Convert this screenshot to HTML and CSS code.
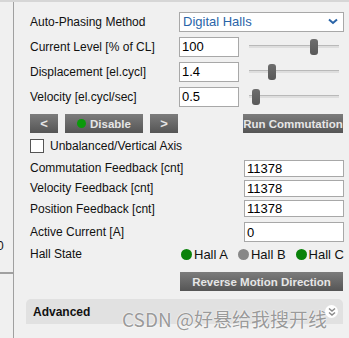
FILE: index.html
```html
<!DOCTYPE html>
<html lang="en">
<head>
  <meta charset="UTF-8">
  <title>Commutation</title>
  <link rel="stylesheet" href="styles.css">
</head>
<body>

  <div class="page">

    <div class="side">
      <div class="side-value">0</div>
      <div class="side-rule"></div>
    </div>

    <div class="main">

      <div class="row">
        <span class="label">Auto-Phasing Method</span>
        <div class="select">
          <span>Digital Halls</span>
          <svg width="10" height="7" viewBox="0 0 10 7"><path d="M1 1.5 L5 5 L9 1.5" fill="none" stroke="#2a64a8" stroke-width="2"/></svg>
        </div>
      </div>

      <div class="row">
        <span class="label">Current Level [% of CL]</span>
        <input class="field" type="text" value="100">
        <div class="slider"><div class="track"></div><div class="thumb" style="left: 61px"></div></div>
      </div>

      <div class="row">
        <span class="label">Displacement [el.cycl]</span>
        <input class="field" type="text" value="1.4">
        <div class="slider"><div class="track"></div><div class="thumb" style="left: 19px"></div></div>
      </div>

      <div class="row">
        <span class="label">Velocity [el.cycl/sec]</span>
        <input class="field" type="text" value="0.5">
        <div class="slider"><div class="track"></div><div class="thumb" style="left: 3px"></div></div>
      </div>

      <div class="button-row">
        <button class="btn btn-arrow">&lt;</button>
        <button class="btn btn-enable"><span class="dot"></span>Disable</button>
        <button class="btn btn-arrow">&gt;</button>
        <button class="btn btn-run">Run Commutation</button>
      </div>

      <div class="check-row">
        <span class="checkbox"></span>
        <span>Unbalanced/Vertical Axis</span>
      </div>

      <div class="row feed r1">
        <span class="label">Commutation Feedback [cnt]</span>
        <input class="value" type="text" value="11378">
      </div>
      <div class="row feed r2">
        <span class="label">Velocity Feedback [cnt]</span>
        <input class="value" type="text" value="11378">
      </div>
      <div class="row feed r3">
        <span class="label">Position Feedback [cnt]</span>
        <input class="value" type="text" value="11378">
      </div>
      <div class="row feed r4">
        <span class="label">Active Current [A]</span>
        <input class="value tall" type="text" value="0">
      </div>

      <div class="row hall-row">
        <span class="label">Hall State</span>
        <div class="halls">
          <span class="hall"><span class="led on"></span>Hall A</span>
          <span class="hall"><span class="led"></span>Hall B</span>
          <span class="hall"><span class="led on"></span>Hall C</span>
        </div>
      </div>

      <div class="reverse-row">
        <button class="btn btn-reverse">Reverse Motion Direction</button>
      </div>

      <div class="advanced">
        <span>Advanced</span>
        <span class="expand">
          <svg width="12" height="12" viewBox="0 0 12 12"><path d="M3 2.5 L6 5 L9 2.5 M3 6.5 L6 9 L9 6.5" fill="none" stroke="#8a8a8a" stroke-width="1.5"/></svg>
        </span>
      </div>

    </div>

    <div class="watermark">CSDN @好悬给我搜开线</div>

  </div>

</body>
</html>
```

FILE: styles.css
```css
body {
  margin: 0;
  background: #f0f0f0;
  font-family: "Liberation Sans", Arial, sans-serif;
  font-size: 12px;
  color: #111;
}

.page {
  position: relative;
  display: flex;
  height: 338px;
  border-top: 2px solid #d6d6d6;
  box-sizing: border-box;
  overflow: hidden;
}

.side {
  width: 13px;
  flex: none;
  border-right: 1px solid #a0a0a0;
  overflow: hidden;
}

.side-value {
  margin-top: 236px;
  margin-left: -3px;
  height: 16px;
  line-height: 16px;
}

.side-value + .side-rule {
  margin-top: 18px;
  border-top: 2px solid #a0a0a0;
}

.main {
  flex: 1;
  padding: 7px 5px 0 16px;
}

.row {
  display: flex;
  align-items: center;
  height: 25px;
}

.label {
  width: 149px;
  flex: none;
  white-space: nowrap;
}

.select {
  flex: 1;
  height: 20px;
  box-sizing: border-box;
  border: 1px solid #a8a8a8;
  background: #fff;
  color: #2a64a8;
  font-size: 13px;
  display: flex;
  align-items: center;
  justify-content: space-between;
  padding: 0 5px 0 3px;
}

.field {
  width: 60px;
  height: 20px;
  box-sizing: border-box;
  border: 1px solid #a8a8a8;
  background: #fff;
  font: inherit;
  font-size: 13px;
  padding: 0 2px;
  margin: 0;
}

.slider {
  position: relative;
  width: 90px;
  height: 16px;
  margin-left: 10px;
}

.track {
  margin-top: 6px;
  height: 3px;
  box-sizing: border-box;
  border-top: 1px solid #b9b9b9;
  background: #dedede;
}

.thumb {
  position: absolute;
  top: 0;
  width: 8px;
  height: 16px;
  border-radius: 3px;
  background: linear-gradient(#6e6e6e, #595959);
}

.button-row {
  display: flex;
  align-items: center;
  margin-top: 5px;
  height: 19px;
}

.btn {
  height: 19px;
  border: none;
  margin: 0;
  padding: 0;
  background: linear-gradient(#7c7c7c, #555);
  color: #e6e6e6;
  font-family: "Liberation Sans", Arial, sans-serif;
  font-size: 11.5px;
  font-weight: bold;
  white-space: nowrap;
  display: flex;
  align-items: center;
  justify-content: center;
}

.btn-arrow {
  width: 28px;
  font-size: 13px;
}

.btn-enable {
  width: 78px;
  margin: 0 7px;
  gap: 4px;
}

.dot {
  width: 9px;
  height: 9px;
  border-radius: 50%;
  background: #0a9a0a;
}

.btn-run {
  width: 100px;
  margin-left: auto;
  margin-right: 1px;
}

.check-row {
  display: flex;
  align-items: center;
  gap: 6px;
  height: 23px;
  margin-top: 1px;
}

.checkbox {
  width: 12px;
  height: 12px;
  border: 1px solid #555;
  background: #fff;
}

.feed {
  justify-content: space-between;
}

.feed .label {
  width: auto;
}

.r1, .r2 { height: 20px; }
.r1 { margin-top: 1px; }
.r3 { height: 21px; }
.r4 { height: 22px; margin-top: 2px; }

.value {
  width: 100px;
  height: 17px;
  box-sizing: border-box;
  border: 1px solid #a8a8a8;
  background: #fff;
  font: inherit;
  font-size: 13px;
  padding: 0 2px;
  margin: 0;
}

.value.tall {
  height: 20px;
}

.hall-row {
  height: 22px;
}

.halls {
  flex: 1;
  display: flex;
  justify-content: space-between;
  padding-left: 2px;
  font-size: 13px;
}

.hall {
  display: flex;
  align-items: center;
  gap: 2px;
}

.led {
  width: 11px;
  height: 11px;
  border-radius: 50%;
  background: #888;
}

.led.on {
  background: #0a820a;
}

.reverse-row {
  display: flex;
  justify-content: flex-end;
  margin-top: 7px;
}

.btn-reverse {
  width: 163px;
  margin-right: 1px;
}

.advanced {
  margin: 8px 1px 0 -4px;
  height: 25px;
  background: #e1e1e1;
  border-radius: 5px 5px 0 0;
  display: flex;
  align-items: center;
  justify-content: space-between;
  padding: 0 5px 0 7px;
  font-weight: bold;
}

.expand {
  width: 13px;
  height: 13px;
  border-radius: 50%;
  background: #fff;
  display: flex;
  align-items: center;
  justify-content: center;
}

.watermark {
  position: absolute;
  left: 122px;
  top: 303px;
  font-family: "Noto Sans CJK SC", sans-serif;
  font-size: 19px;
  color: #9a9a9a;
  text-shadow: 0 0 2px #fff, 0 0 1px #fff;
  white-space: nowrap;
}
```
